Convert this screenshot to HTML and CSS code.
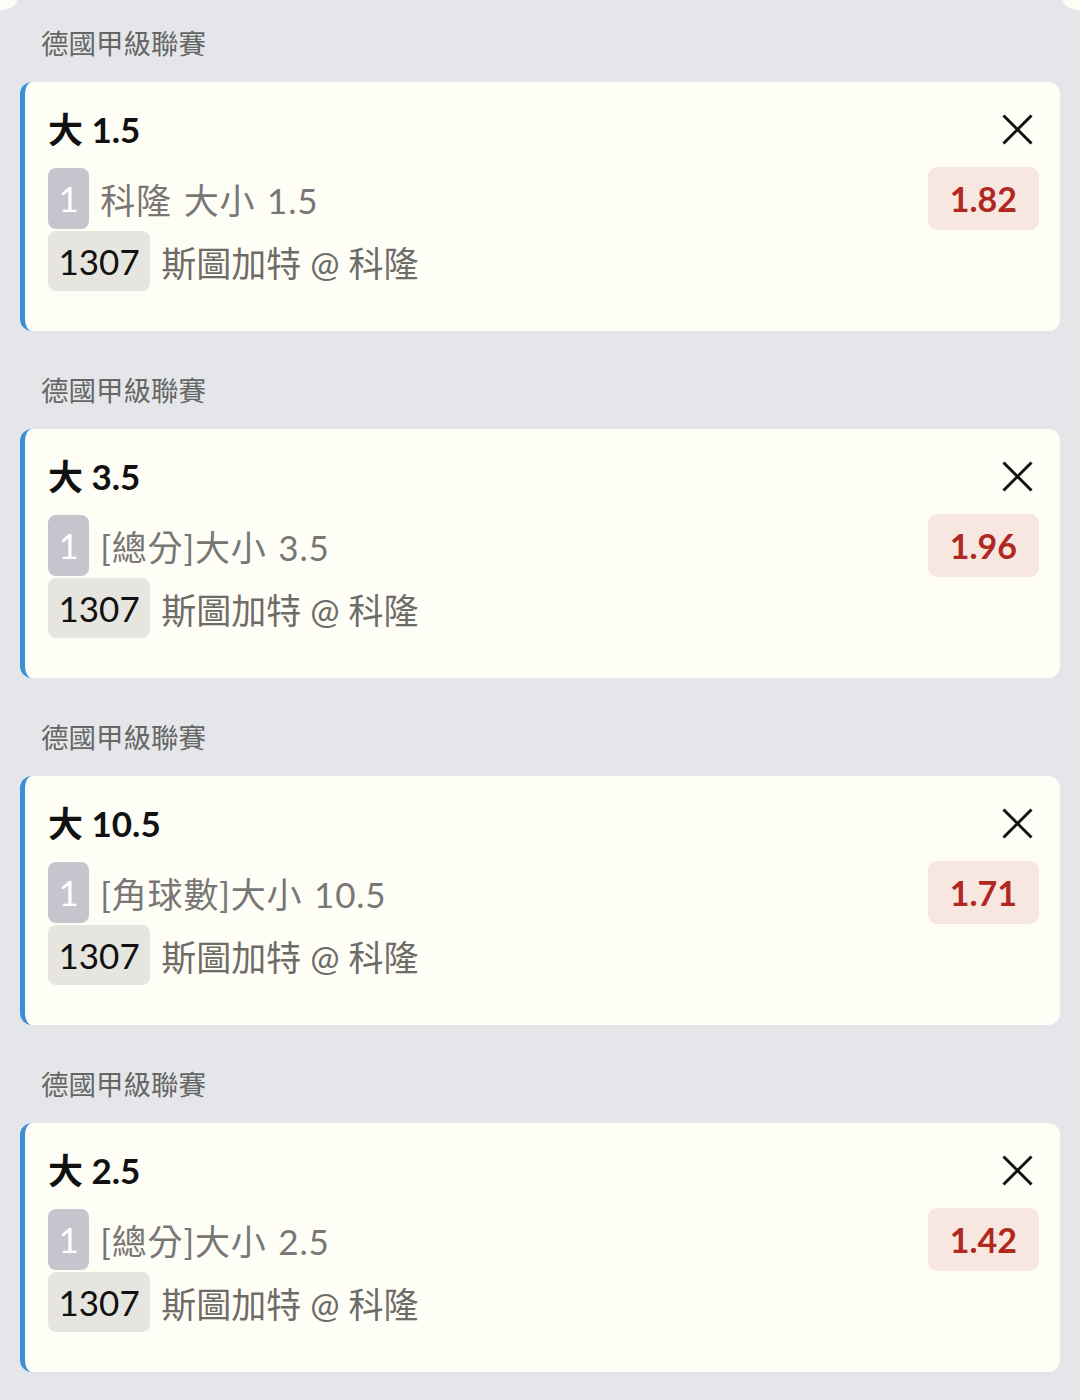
FILE: index.html
```html
<!DOCTYPE html>
<html lang="zh-Hant">
<head>
    <meta charset="UTF-8" />
    <meta name="viewport" content="width=device-width, initial-scale=1.0">
    <title>注單</title>
    <link rel="stylesheet" href="styles.css">
</head>
<body>
    <div class="slip">
        <div class="slip-top"><span></span><span></span></div>

        <section class="bet">
            <div class="league">德國甲級聯賽</div>
            <div class="card">
                <div class="pick">大 1.5</div>
                <button class="close" aria-label="移除">
                    <svg viewBox="0 0 31 31" width="31" height="31"><path d="M1.5 1.5 L29.5 29.5 M29.5 1.5 L1.5 29.5" /></svg>
                </button>
                <div class="line"><span class="tag tag-seq">1</span><span class="desc desc-market">科隆 大小 1.5</span></div>
                <div class="odds">1.82</div>
                <div class="line"><span class="tag tag-code">1307</span><span class="desc">斯圖加特 @ 科隆</span></div>
            </div>
        </section>

        <section class="bet">
            <div class="league">德國甲級聯賽</div>
            <div class="card">
                <div class="pick">大 3.5</div>
                <button class="close" aria-label="移除">
                    <svg viewBox="0 0 31 31" width="31" height="31"><path d="M1.5 1.5 L29.5 29.5 M29.5 1.5 L1.5 29.5" /></svg>
                </button>
                <div class="line"><span class="tag tag-seq">1</span><span class="desc desc-market">[總分]大小 3.5</span></div>
                <div class="odds">1.96</div>
                <div class="line"><span class="tag tag-code">1307</span><span class="desc">斯圖加特 @ 科隆</span></div>
            </div>
        </section>

        <section class="bet">
            <div class="league">德國甲級聯賽</div>
            <div class="card">
                <div class="pick">大 10.5</div>
                <button class="close" aria-label="移除">
                    <svg viewBox="0 0 31 31" width="31" height="31"><path d="M1.5 1.5 L29.5 29.5 M29.5 1.5 L1.5 29.5" /></svg>
                </button>
                <div class="line"><span class="tag tag-seq">1</span><span class="desc desc-market">[角球數]大小 10.5</span></div>
                <div class="odds">1.71</div>
                <div class="line"><span class="tag tag-code">1307</span><span class="desc">斯圖加特 @ 科隆</span></div>
            </div>
        </section>

        <section class="bet">
            <div class="league">德國甲級聯賽</div>
            <div class="card">
                <div class="pick">大 2.5</div>
                <button class="close" aria-label="移除">
                    <svg viewBox="0 0 31 31" width="31" height="31"><path d="M1.5 1.5 L29.5 29.5 M29.5 1.5 L1.5 29.5" /></svg>
                </button>
                <div class="line"><span class="tag tag-seq">1</span><span class="desc desc-market">[總分]大小 2.5</span></div>
                <div class="odds">1.42</div>
                <div class="line"><span class="tag tag-code">1307</span><span class="desc">斯圖加特 @ 科隆</span></div>
            </div>
        </section>
    </div>
</body>
</html>
```

FILE: styles.css
```css
* {
    margin: 0;
    padding: 0;
    box-sizing: border-box;
}

body {
    background-color: #fffef6;
    font-family: Lato, "Noto Sans CJK TC", sans-serif;
    color: #111;
}

.slip {
    background-color: #e5e6e9;
    min-height: 100vh;
    padding-bottom: 30px;
}

.slip-top {
    display: flex;
    justify-content: space-between;
    height: 10px;
}

.slip-top span {
    width: 17px;
    background-color: #fffef6;
}

.slip-top span:first-child {
    border-bottom-right-radius: 17px 10px;
}

.slip-top span:last-child {
    border-bottom-left-radius: 17px 10px;
}

.bet {
    padding: 40px 20px 0;
}

.slip-top + .bet {
    padding-top: 14px;
}

.league {
    font-size: 27.5px;
    line-height: 40px;
    color: #666;
    padding-left: 21px;
}

.card {
    margin-top: 18px;
    background-color: #fffef6;
    border-left: 5px solid #3b8fd8;
    border-radius: 12px;
    padding: 23px 21px 40px 23px;
    display: grid;
    grid-template-columns: 1fr auto;
    row-gap: 1px;
}

.pick {
    font-size: 35px;
    font-weight: 700;
    line-height: 48px;
    margin-bottom: 13px;
}

.close {
    grid-column: 2;
    grid-row: 1;
    align-self: center;
    justify-self: end;
    margin-right: 6px;
    margin-bottom: 13px;
    width: 31px;
    height: 31px;
    border: none;
    background: none;
    cursor: pointer;
}

.close svg {
    display: block;
    fill: none;
    stroke: #111;
    stroke-width: 3;
}

.line {
    display: flex;
    align-items: center;
    gap: 11px;
    font-size: 35px;
}

.tag {
    padding: 0 10.5px;
    border-radius: 8px;
}

.tag-seq {
    line-height: 61px;
    background-color: #c5c5cd;
    color: #fff;
}

.tag-code {
    line-height: 60px;
    background-color: #e7e5df;
    color: #111;
}

.desc {
    color: #6e6c69;
}

.desc-market {
    letter-spacing: 0.8px;
    word-spacing: 2px;
    color: #797775;
}

.odds {
    grid-column: 2;
    grid-row: 2;
    align-self: center;
    background-color: #f8e7e1;
    color: #b0291f;
    font-size: 34px;
    font-weight: 700;
    line-height: 63px;
    padding: 0 22px;
    border-radius: 9px;
}
```
